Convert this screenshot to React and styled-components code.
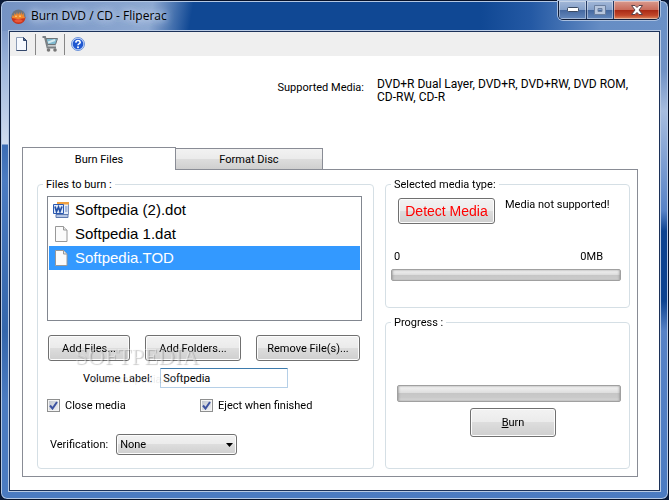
import React, { useState } from "react";
import styled, { createGlobalStyle } from "styled-components";

const GlobalStyle = createGlobalStyle`
  * {
    box-sizing: border-box;
  }
  body {
    margin: 0;
    background: #0a1a38;
    color: #000;
    font: 11px/13px Roboto, sans-serif;
  }
  button, input, select {
    font: inherit;
    color: inherit;
    margin: 0;
  }
`;

const Window = styled.div`
  display: flex;
  flex-direction: column;
  min-height: 100vh;
  padding: 0 7px 7px;
  border: 1px solid #07122a;
  border-radius: 7px;
  box-shadow: inset 0 0 0 1px #b4c8e4;
  background:
    linear-gradient(100deg, #7492c3 0, #8ea9d2 150px, #10489400 190px) 0 0 / 100% 30px no-repeat,
    linear-gradient(90deg, #104894 0, #104894 480px, #2459a4 530px, #668dc4 600px, #6a90c6 100%) 0 0 / 100% 30px no-repeat,
    linear-gradient(180deg, #7f9bca 30px, #a1b9dd 70px, #d0dcef 143px, #3c6db4 144px, #4b7bc1 180px, #3466ab 330px, #4b7bc1 400px, #4b7bc1 100%) 0 0 / 51% 100% no-repeat,
    linear-gradient(180deg, #6a90c6 30px, #6f91c4 70px, #a7bddf 110px, #5782c6 210px, #0d4390 230px, #0d4390 300px, #5782c6 330px, #4b7bc1 100%) 100% 0 / 51% 100% no-repeat;
`;

const TitleBar = styled.header`
  display: flex;
  align-items: flex-start;
  height: 29px;
  padding-right: 1px;
`;

const Title = styled.h1`
  flex: 1;
  display: flex;
  align-items: center;
  gap: 5px;
  margin: 0;
  padding: 7px 0 0 3px;
  font: 12px/16px "Open Sans", sans-serif;
  text-shadow: 0 0 6px #c3d2e9, 0 0 8px #c3d2e9, 0 0 10px #c3d2e9;
`;

const Controls = styled.div`
  display: flex;
  height: 19px;
  border: 1px solid #101d38;
  border-top: 0;
  border-radius: 0 0 5px 5px;
  box-shadow: 0 0 0 1px #a9bfdf;
  overflow: hidden;
`;

const ControlButton = styled.button`
  width: ${(p) => (p.$close ? 46 : 27)}px;
  padding: 0;
  border: 0;
  border-left: ${(p) => (p.$first ? "0" : "1px solid #243a63")};
  display: flex;
  align-items: center;
  justify-content: center;
  box-shadow: inset 0 0 0 1px #ffffff66;
  background: ${(p) =>
    p.$close
      ? "linear-gradient(#d89a8e 0, #c96c5b 48%, #a82814 50%, #c2472a 80%, #dc8a60 100%)"
      : "linear-gradient(#a3b8d8 0, #86a1ca 48%, #45689f 50%, #6488bd 100%)"};
`;

const Client = styled.div`
  flex: 1;
  display: flex;
  border: 1px solid #b8cae4;
`;

const ClientBody = styled.div`
  flex: 1;
  display: flex;
  flex-direction: column;
  border: 1px solid #1c3259;
  background: #fff;
`;

const Toolbar = styled.div`
  display: flex;
  align-items: center;
  height: 24px;
  background: #efefef;
`;

const ToolButton = styled.button`
  display: flex;
  padding: 0 6px;
  border: 0;
  background: none;
`;

const Divider = styled.div`
  width: 1px;
  height: 21px;
  background: #868686;
`;

const Page = styled.main`
  flex: 1;
  display: flex;
  flex-direction: column;
  padding: 22px 21px 13px 12px;
`;

const MediaInfo = styled.dl`
  display: flex;
  justify-content: flex-end;
  gap: 13px;
  margin: 0 0 43px;
  dt {
    padding-top: 3px;
  }
  dd {
    width: 261px;
    margin: 0;
    font-size: 12px;
  }
`;

const Tabs = styled.div`
  display: flex;
  align-items: flex-end;
`;

const Tab = styled.button`
  position: relative;
  width: ${(p) => (p.$active ? 154 : 147)}px;
  height: ${(p) => (p.$active ? 23 : 21)}px;
  margin-bottom: ${(p) => (p.$active ? -1 : 0)}px;
  padding: 0;
  border: 1px solid #898c95;
  border-bottom: 0;
  border-left-width: ${(p) => (p.$active ? 1 : 0)}px;
  background: ${(p) =>
    p.$active ? "#fff" : "linear-gradient(#f2f2f2 0, #ebebeb 48%, #dddddd 50%, #cfcfcf 100%)"};
`;

const Panel = styled.section`
  flex: 1;
  display: grid;
  grid-template-columns: 337fr 245fr;
  gap: 11px;
  padding: 8px 7px 7px 14px;
  border: 1px solid #898c95;
`;

const Column = styled.div`
  display: flex;
  flex-direction: column;
  gap: 8px;
  min-width: 0;
`;

const Group = styled.fieldset`
  flex: ${(p) => (p.$grow ? "1" : "none")};
  min-width: 0;
  margin: 0;
  padding: 0;
  border: 1px solid #d5dfe5;
  border-radius: 4px;
`;

const Legend = styled.legend`
  margin-left: 5px;
  padding: 0 3px;
`;

const FilesBody = styled.div`
  padding: 5px 11px 13px 9px;
`;

const FileList = styled.ul`
  height: 125px;
  margin: 0 0 14px;
  padding: 1px;
  border: 1px solid #828790;
  list-style: none;
`;

const FileItem = styled.li`
  display: flex;
  align-items: center;
  gap: 6px;
  height: 24px;
  padding-left: 4px;
  font: 15px/24px "Liberation Sans", Arial, sans-serif;
  color: ${(p) => (p.$selected ? "#fff" : "#000")};
  background: ${(p) => (p.$selected ? "#3399ff" : "#fff")};
`;

const Button = styled.button`
  width: ${(p) => p.$width}px;
  height: ${(p) => (p.$tall ? 29 : 26)}px;
  padding: 0;
  border: 1px solid #707070;
  border-radius: 3px;
  box-shadow: inset 0 0 0 1px #fcfcfc;
  background: linear-gradient(#f2f2f2 0, #ebebeb 49%, #dddddd 50%, #cfcfcf 100%);
`;

const DetectButton = styled(Button)`
  font: 14px/16px "Liberation Sans", Arial, sans-serif;
  color: #ff0000;
`;

const ButtonRow = styled.div`
  position: relative;
  display: flex;
  gap: 15px;
  padding-left: 1px;
`;

const Watermark = styled.div`
  position: absolute;
  left: 28px;
  top: 9px;
  text-align: center;
  font: 23px/26px "Liberation Serif", serif;
  color: #ffffff66;
  text-shadow: 1px 1px 1px #00000033;
  pointer-events: none;
  small {
    display: block;
    font: 11px/16px "Liberation Sans", Arial, sans-serif;
    color: #ffffff4d;
    text-shadow: 1px 1px 1px #0000001a;
  }
`;

const Field = styled.div`
  display: flex;
  align-items: center;
  gap: 8px;
  padding-left: 3px;
`;

const VolumeField = styled(Field)`
  margin: 7px 0 11px;
  padding-left: 36px;
`;

const TextInput = styled.input`
  width: 128px;
  height: 20px;
  padding: 0 2px;
  border: 1px solid #b5cfe7;
  border-top-color: #3d7bad;
  border-radius: 1px;
  outline: 0;
`;

const CheckRow = styled.div`
  display: grid;
  grid-template-columns: 153px 1fr;
  margin-bottom: 22px;
`;

const CheckLabel = styled.label`
  position: relative;
  display: flex;
  align-items: center;
  gap: 5px;
  svg {
    position: absolute;
    left: 2px;
    top: 2px;
    pointer-events: none;
  }
`;

const CheckInput = styled.input`
  appearance: none;
  width: 13px;
  height: 13px;
  border: 1px solid #8e8f8f;
  box-shadow: inset 0 0 0 1px #f4f4f4;
  background: linear-gradient(135deg, #bcc2cc, #f4f4f6);
`;

const SelectWrap = styled.div`
  position: relative;
  svg {
    position: absolute;
    right: 4px;
    top: 9px;
    pointer-events: none;
  }
`;

const Select = styled.select`
  display: block;
  appearance: none;
  width: 121px;
  height: 21px;
  padding: 0 3px;
  border: 1px solid #707070;
  border-radius: 3px;
  box-shadow: inset 0 0 0 1px #fcfcfc;
  background: linear-gradient(#f2f2f2 0, #ebebeb 49%, #dddddd 50%, #cfcfcf 100%);
`;

const MediaBody = styled.div`
  padding: 7px 8px 26px 5px;
`;

const DetectRow = styled.div`
  display: flex;
  gap: 10px;
  padding-left: 7px;
`;

const Range = styled.div`
  display: flex;
  justify-content: space-between;
  margin: 26px 0 6px;
  padding: 0 18px 0 3px;
`;

const ProgressBody = styled.div`
  padding: 56px 8px 31px 11px;
`;

const BurnRow = styled.div`
  display: flex;
  justify-content: center;
  padding: 6px 0 0 8px;
`;

const Bar = styled.div`
  height: ${(p) => (p.$tall ? 17 : 12)}px;
  border: 1px solid #a0a0a0;
  border-radius: 2px;
  box-shadow: inset 1px 0 2px #8e8e8e99, inset -1px 0 2px #8e8e8e99;
  background: linear-gradient(#f4f4f4 0, #dedede 45%, #c6c6c6 50%, #cacaca 80%, #e2e2e2 100%);
`;

const FlameIcon = () => (
  <svg width="15" height="15" viewBox="0 0 15 15">
    <circle cx="7.5" cy="7.5" r="7" fill="#6f747d" />
    <path d="M.5 8h14a7 7 0 0 1-14 0z" fill="#c8341c" />
    <path d="M1 9l.5-3L3 7l.5-3L5 6l1-3 1 3 1.500-3 .5 3L10.500 3l.5 3 1.500-2 .5 3 1 2-3 .5-4 .5-3-.5z" fill="#f0872c" />
    <path d="M4 8l1-2 1 2zM8 8l1-2.500 1 2.500z" fill="#ffd07a" />
    <path d="M3 12q4.500 3 9 0-1.500-2-4.500-2T3 12z" fill="#e8583a" />
  </svg>
);

const NewIcon = () => (
  <svg width="13" height="14" viewBox="0 0 13 14">
    <path d="M.5.5h7l3 3v10H.5z" fill="#f7faff" stroke="#8b9bb5" />
    <path d="M10.500 3.500v10H.5" fill="none" stroke="#33476b" />
    <path d="M7.500.5v3h3z" fill="#526c95" stroke="#33476b" />
  </svg>
);

const CartIcon = () => (
  <svg width="16" height="16" viewBox="0 0 16 16">
    <path d="M4 2.500h11.500L13.500 8.500H5.500z" fill="#7fb9cf" stroke="#6d7478" />
    <path d="M6 6.500L13 4" stroke="#d5eaf1" strokeWidth="2" />
    <path d="M.5 1h2.500l2.500 10.500H14" fill="none" stroke="#7a8084" strokeWidth="2" />
    <path d="M5 10h9" stroke="#a2a8ab" />
    <circle cx="6.500" cy="14" r="1.800" fill="#777" />
    <circle cx="13" cy="14" r="1.800" fill="#777" />
  </svg>
);

const HelpIcon = () => (
  <svg width="14" height="14" viewBox="0 0 14 14">
    <circle cx="7" cy="7" r="6.500" fill="#c9dafa" stroke="#6d93da" />
    <circle cx="7" cy="7" r="5.300" fill="#2058d0" />
    <path d="M4.800 5.600q.2-2.100 2.200-2.100t2.200 1.700q0 1-1.200 1.700-1 .5-1 1.400" fill="none" stroke="#fff" strokeWidth="1.600" />
    <circle cx="7" cy="10.300" r="1" fill="#fff" />
  </svg>
);

const WordIcon = () => (
  <svg width="16" height="16" viewBox="0 0 16 16">
    <path d="M4.500.5h11v12h-11z" fill="#e4ecf8" stroke="#7c92bd" />
    <path d="M4 0h12v2.500H4z" fill="#f0a040" />
    <path d="M12 5h2.500M12 7h2.500M12 9h2.500" stroke="#6887c0" />
    <path d="M3 12.500h12v3H3z" fill="#b4c5e4" stroke="#5e7ab0" />
    <path d="M.5 2.500h10v9H.5z" fill="#dfe9f8" stroke="#2a58b0" />
    <path d="M2 4.500l1.500 5 2-4.500 1.500 4.500 2-5" fill="none" stroke="#2450a6" strokeWidth="1.700" />
  </svg>
);

const FileIcon = () => (
  <svg width="16" height="16" viewBox="0 0 16 16">
    <path d="M2.500.5h8l3.500 3.500v11.500H2.500z" fill="#fbfbfb" stroke="#989898" />
    <path d="M10.500.5V4H14" fill="#e6e6e6" stroke="#989898" />
  </svg>
);

const Check = () => (
  <svg width="9" height="9" viewBox="0 0 9 9">
    <path d="M1 4.500l2.500 3L8 1" fill="none" stroke="#3c52a0" strokeWidth="2" />
  </svg>
);

const files = [
  { name: "Softpedia (2).dot", icon: WordIcon },
  { name: "Softpedia 1.dat", icon: FileIcon },
  { name: "Softpedia.TOD", icon: FileIcon },
];

const App = () => {
  const [selected, setSelected] = useState("Softpedia.TOD");
  const [label, setLabel] = useState("Softpedia");
  const [closeMedia, setCloseMedia] = useState(true);
  const [eject, setEject] = useState(true);

  return (
    <>
      <GlobalStyle />
      <Window>
        <TitleBar>
          <Title>
            <FlameIcon />
            Burn DVD / CD - Fliperac
          </Title>
          <Controls>
            <ControlButton $first aria-label="Minimize">
              <svg width="12" height="6" viewBox="0 0 12 6">
                <rect x=".5" y=".5" width="11" height="4" rx="1" fill="#fff" stroke="#3b4a63" />
              </svg>
            </ControlButton>
            <ControlButton aria-label="Maximize">
              <svg width="12" height="10" viewBox="0 0 12 10">
                <path d="M.5.5h11v9H.5zM4 3.500v3h4v-3z" fill="#b7c6de" stroke="#6b7f9f" fillRule="evenodd" />
              </svg>
            </ControlButton>
            <ControlButton $close aria-label="Close">
              <svg width="12" height="10" viewBox="0 0 12 10">
                <path d="M.5.5h3.500l2 2 2-2h3.500L8 5l3.500 4.500H8l-2-2-2 2H.5L4 5z" fill="#fff" stroke="#5a4248" />
              </svg>
            </ControlButton>
          </Controls>
        </TitleBar>
        <Client>
          <ClientBody>
            <Toolbar>
              <ToolButton aria-label="New">
                <NewIcon />
              </ToolButton>
              <Divider />
              <ToolButton aria-label="Buy">
                <CartIcon />
              </ToolButton>
              <Divider />
              <ToolButton aria-label="Help">
                <HelpIcon />
              </ToolButton>
            </Toolbar>
            <Page>
              <MediaInfo>
                <dt>Supported Media:</dt>
                <dd>DVD+R Dual Layer, DVD+R, DVD+RW, DVD ROM, CD-RW, CD-R</dd>
              </MediaInfo>
              <Tabs role="tablist">
                <Tab role="tab" aria-selected="true" $active>
                  Burn Files
                </Tab>
                <Tab role="tab" aria-selected="false">
                  Format Disc
                </Tab>
              </Tabs>
              <Panel>
                <Column>
                  <Group $grow>
                    <Legend>Files to burn :</Legend>
                    <FilesBody>
                      <FileList>
                        {files.map(({ name, icon: Icon }) => (
                          <FileItem
                            key={name}
                            $selected={name === selected}
                            onClick={() => setSelected(name)}
                          >
                            <Icon />
                            {name}
                          </FileItem>
                        ))}
                      </FileList>
                      <ButtonRow>
                        <Button $width={82}>Add Files...</Button>
                        <Button $width={96}>Add Folders...</Button>
                        <Button $width={104}>Remove File(s)...</Button>
                        <Watermark>
                          SOFTPEDIA
                          <small>www.softpedia.com</small>
                        </Watermark>
                      </ButtonRow>
                      <VolumeField>
                        <label htmlFor="volume">Volume Label:</label>
                        <TextInput
                          id="volume"
                          type="text"
                          autoFocus
                          value={label}
                          onChange={(e) => setLabel(e.target.value)}
                        />
                      </VolumeField>
                      <CheckRow>
                        <CheckLabel>
                          <CheckInput
                            type="checkbox"
                            checked={closeMedia}
                            onChange={(e) => setCloseMedia(e.target.checked)}
                          />
                          {closeMedia && <Check />}
                          Close media
                        </CheckLabel>
                        <CheckLabel>
                          <CheckInput
                            type="checkbox"
                            checked={eject}
                            onChange={(e) => setEject(e.target.checked)}
                          />
                          {eject && <Check />}
                          Eject when finished
                        </CheckLabel>
                      </CheckRow>
                      <Field>
                        <label htmlFor="verification">Verification:</label>
                        <SelectWrap>
                          <Select id="verification">
                            <option>None</option>
                          </Select>
                          <svg width="7" height="4" viewBox="0 0 7 4">
                            <path d="M0 0h7L3.500 4z" />
                          </svg>
                        </SelectWrap>
                      </Field>
                    </FilesBody>
                  </Group>
                </Column>
                <Column>
                  <Group>
                    <Legend>Selected media type:</Legend>
                    <MediaBody>
                      <DetectRow>
                        <DetectButton $width={97}>Detect Media</DetectButton>
                        <span>Media not supported!</span>
                      </DetectRow>
                      <Range>
                        <span>0</span>
                        <span>0MB</span>
                      </Range>
                      <Bar role="progressbar" aria-label="Disc usage" />
                    </MediaBody>
                  </Group>
                  <Group $grow>
                    <Legend>Progress :</Legend>
                    <ProgressBody>
                      <Bar $tall role="progressbar" aria-label="Burn progress" />
                      <BurnRow>
                        <Button $width={86} $tall>
                          <u>B</u>urn
                        </Button>
                      </BurnRow>
                    </ProgressBody>
                  </Group>
                </Column>
              </Panel>
            </Page>
          </ClientBody>
        </Client>
      </Window>
    </>
  );
};

export default App;
